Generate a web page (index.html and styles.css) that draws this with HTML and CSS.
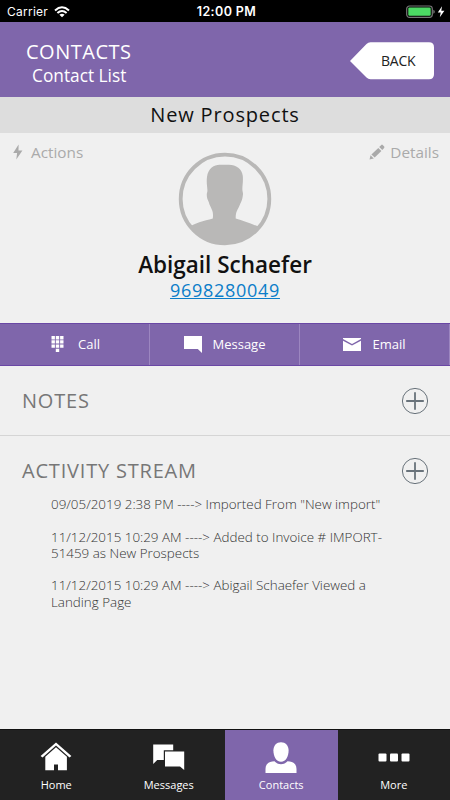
FILE: index.html
```html
<!DOCTYPE html>
<html lang="en">
<head>
    <meta charset="UTF-8">
    <meta name="viewport" content="width=device-width, initial-scale=1.0">
    <title>Contacts</title>
    <link rel="stylesheet" href="styles.css">
</head>
<body>

<div class="status">
    <div class="carrier">
        <span>Carrier</span>
        <svg width="16" height="12" viewBox="0 0 16 12" fill="none" stroke="#fff" stroke-width="2">
            <path d="M1 4.4 Q8 -1.8 15 4.4"/>
            <path d="M3.4 7 Q8 3 12.6 7"/>
            <path d="M8 11.3 L5.4 8.7 Q8 6.6 10.6 8.7 Z" fill="#fff" stroke="none"/>
        </svg>
    </div>
    <div class="time">12:00 PM</div>
    <div class="battery">
        <svg width="40" height="14" viewBox="0 0 40 14">
            <rect x="0.7" y="1" width="25.6" height="11.4" rx="2.8" fill="none" stroke="#777" stroke-width="1.2"/>
            <rect x="2.3" y="2.6" width="22.4" height="8.2" rx="1.2" fill="#4cd964"/>
            <path d="M27.3 4.7 q1.5 0.5 1.5 2 t-1.5 2z" fill="#777"/>
            <path d="M36 1.2 L31.8 7.6 H34.7 L33.8 12.3 L38.4 5.8 H35.3 Z" fill="#fff"/>
        </svg>
    </div>
</div>

<div class="header">
    <div class="titles">
        <div class="title">CONTACTS</div>
        <div class="subtitle">Contact List</div>
    </div>
    <div class="back">
        <svg class="back-shape" width="84" height="38" viewBox="0 0 84 38">
            <path d="M0 19 L16.5 2 Q18.2 0.2 20.5 0.2 H79 Q84 0.2 84 5.2 V32.2 Q84 37.2 79 37.2 H20.5 Q18.2 37.2 16.5 35.5 Z" fill="#fff"/>
        </svg>
        <span class="back-text">BACK</span>
    </div>
</div>

<div class="group">New Prospects</div>

<div class="profile">
    <div class="link actions">
        <svg width="10" height="16" viewBox="0 0 10 16"><path d="M5.6 0.6 L0.2 9 H4.1 L3.3 15.4 L9.4 6.4 H5.5 Z" fill="#aaa"/></svg>
        <span>Actions</span>
    </div>
    <div class="person">
        <svg class="avatar" width="94" height="94" viewBox="0 0 94 94">
            <defs><clipPath id="disc"><circle cx="47" cy="47" r="45"/></clipPath></defs>
            <circle cx="47" cy="47" r="44.3" fill="none" stroke="#b9b8b7" stroke-width="3.8"/>
            <path clip-path="url(#disc)" fill="#b9b8b7" d="M10 76 C16 71 26 69 34.8 66.5 C35.5 60 34.5 59 31.5 52.5 C31 49 28.6 47.5 28.8 42 C28.9 41 29.5 40 29.4 38 C29.2 34 28.3 30 29 25 C30 16 37 12.5 42 12.8 H51 C58 12.8 64.2 17 64.8 24 C65.3 30 64.2 34 64.4 38 C64.5 40 65.3 41 64.9 43 C64.4 48 63 50 62 52.5 C59.8 58 57.6 59 57.7 66.5 C66 69 74 72 84 76 V94 H10 Z"/>
        </svg>
        <div class="name">Abigail Schaefer</div>
        <div class="phone">9698280049</div>
    </div>
    <div class="link details">
        <svg width="16" height="16" viewBox="0 0 16 16" fill="#aaa">
            <path d="M0.5 15.5 L1.6 11.2 L4.8 14.4 Z"/>
            <path d="M2.4 10.4 L9.3 3.9 L12.4 7 L5.7 13.6 Z"/>
            <path d="M10.2 3 L12.3 0.9 Q13 0.3 13.7 0.9 L15.2 2.5 Q15.7 3.2 15.1 3.9 L13.3 6.1 Z"/>
        </svg>
        <span>Details</span>
    </div>
</div>

<div class="buttons">
    <div class="button">
        <svg width="18" height="18" viewBox="0 0 18 18" fill="#fff">
            <path d="M2.5 1h3.4v3.4H2.5z M6.8 1h3.4v3.4H6.8z M11.1 1H14.5v3.4h-3.4z M2.5 5.2h3.4v3.4H2.5z M6.8 5.2h3.4v3.4H6.8z M11.1 5.2H14.5v3.4h-3.4z M2.5 9.4h3.4v3.4H2.5z M6.8 9.4h3.4v3.4H6.8z M11.1 9.4H14.5v3.4h-3.4z M6.8 13.8h3.4v3.2H6.8z"/>
        </svg>
        <span>Call</span>
    </div>
    <div class="button">
        <svg width="18" height="18" viewBox="0 0 18 18"><path d="M0 1H18V18L13.8 14H0Z" fill="#fff"/></svg>
        <span>Message</span>
    </div>
    <div class="button">
        <svg width="18" height="18" viewBox="0 0 18 18" fill="#fff"><path d="M0 3H18V4.1L9 8.9L0 4.1Z"/><path d="M0 5.8L9 10.6L18 5.8V16H0Z"/></svg>
        <span>Email</span>
    </div>
</div>

<div class="section notes">
    <div class="section-head">
        <span>NOTES</span>
        <svg width="28" height="28" viewBox="0 0 28 28" fill="none" stroke="#69737b"><circle cx="14" cy="14" r="12.6"/><path d="M14 5.2V22.8M5.2 14H22.8" stroke-width="1.8"/></svg>
    </div>
</div>

<div class="section activity">
    <div class="section-head">
        <span>ACTIVITY STREAM</span>
        <svg width="28" height="28" viewBox="0 0 28 28" fill="none" stroke="#69737b"><circle cx="14" cy="14" r="12.6"/><path d="M14 5.2V22.8M5.2 14H22.8" stroke-width="1.8"/></svg>
    </div>
    <div class="stream">
        <div class="entry">09/05/2019 2:38 PM ----&gt; Imported From "New import"</div>
        <div class="entry">11/12/2015 10:29 AM ----&gt; Added to Invoice # IMPORT-<br>51459 as New Prospects</div>
        <div class="entry">11/12/2015 10:29 AM ----&gt; Abigail Schaefer Viewed a<br>Landing Page</div>
    </div>
</div>

<div class="tabs">
    <div class="tab">
        <svg width="32" height="32" viewBox="0 0 32 32" fill="#fff">
            <path d="M16 0.4 L31.4 14 L29.5 15.5 L16 3.6 L2.5 15.5 L0.6 14 Z"/>
            <path d="M16 5.3 L26.9 14.8 V28.3 H18 V22.5 H14 V28.3 H5.3 V14.8 Z"/>
        </svg>
        <span>Home</span>
    </div>
    <div class="tab">
        <svg width="32" height="32" viewBox="0 0 32 32" fill="#fff">
            <path d="M0.2 2.5H20.2V8.2H10.8V18H4.2L0.2 22Z"/>
            <path d="M12 9.5H31.2V28L27 24.4H12Z"/>
        </svg>
        <span>Messages</span>
    </div>
    <div class="tab active">
        <svg width="32" height="32" viewBox="0 0 32 32" fill="#fff">
            <path d="M16 0.2 C20.5 0.2 23.6 3.6 23.6 8.5 C23.6 14 21 19.8 16 19.8 C11 19.8 8.4 14 8.4 8.5 C8.4 3.6 11.5 .2 16 .2Z"/>
            <path d="M0.5 31 V27 C0.5 22 4 19.3 9.5 19.3 C11.5 21.4 13.6 22.2 16 22.2 C18.4 22.2 20.5 21.4 22.5 19.3 C28 19.3 31.5 22 31.5 27 V31 Z"/>
        </svg>
        <span>Contacts</span>
    </div>
    <div class="tab">
        <svg width="32" height="32" viewBox="0 0 32 32" fill="#fff"><rect x="0.5" y="11.5" width="8" height="8" rx="1"/><rect x="12" y="11.5" width="8" height="8" rx="1"/><rect x="23.5" y="11.5" width="8" height="8" rx="1"/></svg>
        <span>More</span>
    </div>
</div>

</body>
</html>
```
FILE: styles.css
```css
* {
    box-sizing: border-box;
}
body {
    margin: 0;
    height: 800px;
    display: flex;
    flex-direction: column;
    overflow: hidden;
    background-color: #f0f0f0;
    font-family: "Open Sans", sans-serif;
    white-space: nowrap;
}
svg {
    display: block;
    flex: none;
}
.status {
    height: 22px;
    background-color: #000;
    color: #fff;
    display: grid;
    grid-template-columns: 1fr auto 1fr;
    align-items: center;
    padding: 0 4px 0 7px;
    font-family: Inter, sans-serif;
    font-size: 12px;
    line-height: 22px;
}
.carrier {
    display: flex;
    align-items: center;
    gap: 6px;
    letter-spacing: 0.25px;
}
.time {
    font-weight: 600;
    font-size: 12.5px;
    letter-spacing: 0.4px;
    padding-top: 1px;
}
.battery {
    display: flex;
    justify-content: flex-end;
}
.header {
    height: 75px;
    background-color: #7f66ab;
    color: #fff;
    display: flex;
    justify-content: space-between;
    padding: 17px 16px 0 26px;
}
.title {
    font-size: 20px;
    line-height: 26px;
    letter-spacing: 0.5px;
}
.subtitle {
    font-size: 17.3px;
    line-height: 22px;
    padding-left: 6px;
}
.back {
    position: relative;
    width: 84px;
    height: 38px;
    margin-top: 3px;
}
.back-text {
    position: absolute;
    left: 31px;
    top: 0;
    font-size: 14px;
    line-height: 38px;
    letter-spacing: -0.2px;
    color: #222;
}
.group {
    height: 36px;
    background-color: #ddd;
    color: #111;
    text-align: center;
    font-size: 20px;
    line-height: 36px;
    letter-spacing: 0.85px;
}
.profile {
    height: 190px;
    display: grid;
    grid-template-columns: 1fr auto 1fr;
    padding: 0 11px;
}
.link {
    display: flex;
    align-items: center;
    height: 38px;
    font-size: 15.3px;
    color: #aaa;
}
.actions {
    padding-left: 2px;
    gap: 8px;
}
.details {
    justify-content: flex-end;
    gap: 5px;
}
.person {
    display: flex;
    flex-direction: column;
    align-items: center;
    padding-top: 19px;
}
.name {
    font-size: 22.5px;
    font-weight: 600;
    line-height: 30px;
    margin-top: 4px;
    color: #111;
}
.phone {
    font-size: 18px;
    font-weight: 500;
    line-height: 20px;
    letter-spacing: 0.7px;
    color: #0b7dc9;
    text-decoration: underline;
}
.buttons {
    height: 43px;
    display: grid;
    grid-template-columns: repeat(3, 1fr);
    background-color: #7f66ab;
    border-top: 1px solid #6a47a5;
    border-bottom: 1px solid #6a47a5;
    color: #fff;
}
.button {
    display: flex;
    align-items: center;
    justify-content: center;
    gap: 11px;
    padding-bottom: 2px;
    font-size: 13px;
    border-right: 1px solid #9c86c0;
}
.section {
    color: #777;
}
.notes {
    height: 70px;
    border-bottom: 1px solid #d5d5d5;
}
.section-head {
    height: 69px;
    display: flex;
    align-items: center;
    justify-content: space-between;
    padding: 0 21px 0 22px;
    font-size: 20px;
    letter-spacing: 0.8px;
}
.activity {
    flex: 1;
}
.stream {
    padding-left: 51px;
    margin-top: -9px;
    font-size: 13.4px;
    line-height: 16.3px;
    font-weight: 300;
    color: #333;
}
.entry {
    margin-bottom: 16.3px;
}
.tabs {
    height: 71px;
    display: grid;
    grid-template-columns: repeat(4, 1fr);
    background-color: #222;
    border-top: 1px solid #111;
    color: #fff;
}
.tab {
    display: flex;
    flex-direction: column;
    align-items: center;
    padding-top: 12px;
    font-size: 11px;
    line-height: 16px;
    gap: 3px;
}
.tab.active {
    background-color: #7f66ab;
}
```
